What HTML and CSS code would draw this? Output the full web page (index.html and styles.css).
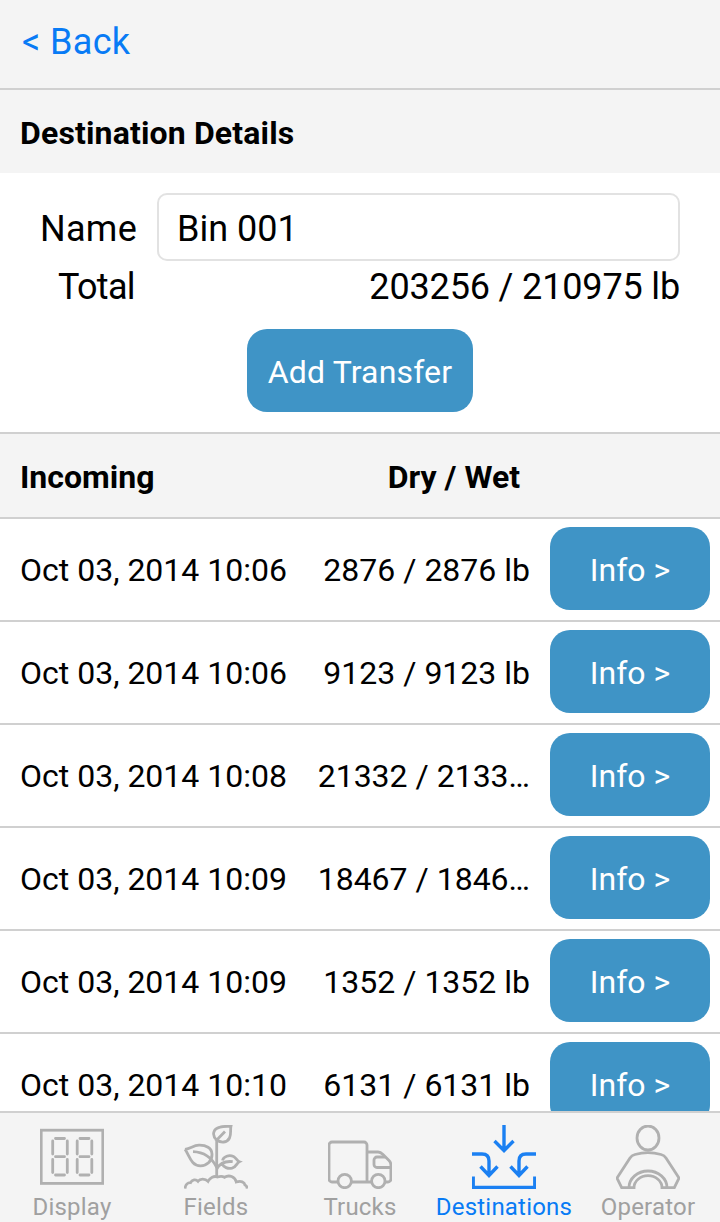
FILE: index.html
```html
<!DOCTYPE html>
<html lang="en">
<head>
    <meta charset="UTF-8">
    <meta name="viewport" content="width=device-width, initial-scale=1.0">
    <title>Destination Details</title>
    <link rel="stylesheet" href="styles.css">
</head>
<body>
    <header class="topbar">
        <a class="back">&lt; Back</a>
    </header>

    <main class="content">
        <h2 class="section-title">Destination Details</h2>

        <div class="details">
            <div class="field">
                <label for="name">Name</label>
                <input type="text" id="name" value="Bin 001">
            </div>
            <div class="field total">
                <span class="label">Total</span>
                <span class="value">203256 / 210975 lb</span>
            </div>
            <button class="button add-button">Add Transfer</button>
        </div>

        <div class="list-header">
            <span>Incoming</span>
            <span class="amount-title">Dry / Wet</span>
        </div>

        <ul class="list">
            <li><span class="date">Oct 03, 2014 10:06</span><span class="amount">2876 / 2876 lb</span><button class="button">Info &gt;</button></li>
            <li><span class="date">Oct 03, 2014 10:06</span><span class="amount">9123 / 9123 lb</span><button class="button">Info &gt;</button></li>
            <li><span class="date">Oct 03, 2014 10:08</span><span class="amount">21332 / 2133…</span><button class="button">Info &gt;</button></li>
            <li><span class="date">Oct 03, 2014 10:09</span><span class="amount">18467 / 1846…</span><button class="button">Info &gt;</button></li>
            <li><span class="date">Oct 03, 2014 10:09</span><span class="amount">1352 / 1352 lb</span><button class="button">Info &gt;</button></li>
            <li><span class="date">Oct 03, 2014 10:10</span><span class="amount">6131 / 6131 lb</span><button class="button">Info &gt;</button></li>
        </ul>
    </main>

    <nav class="tabs">
        <a class="tab">
            <svg viewBox="0 0 64 64">
                <rect x="1.2" y="5.2" width="61.6" height="53.2"/>
                <path stroke-linecap="round" d="M15.500 13.500h9M15.500 31.700h9M15.500 50h9M12.700 16v13M27.300 16v13M12.700 34.500v13M27.300 34.500v13"/>
                <path stroke-linecap="round" d="M40 13.500h9M40 31.700h9M40 50h9M37.200 16v13M51.800 16v13M37.200 34.500v13M51.800 34.500v13"/>
            </svg>
            <span>Display</span>
        </a>
        <a class="tab">
            <svg viewBox="0 0 64 64">
                <path d="M32.700 51V15C27.500 10 29 4 36 2.200C40 1 44 1.500 47 1C46 5 47.500 9 45.500 13C43 18 37 18 32.700 15L41 6.500"/>
                <path d="M1 24.300C7 23.500 9 20.500 15 20.200C22 20 27.800 23 28 29C28.300 36 23 40.800 16.500 40.800C7 40.800 5.500 30.500 1 24.300"/>
                <path d="M9 26.700C18 27 27 31 32.700 42.500"/>
                <path d="M38.500 35.500C39.500 31.500 45 29.500 49.500 31.500C52 32.700 53 35.800 55.300 36.700C52.500 38 52.500 42 48 43.200C44 44 39.500 42.500 38 38.500M48.700 36.700C41 35.800 36 38 32.700 44"/>
                <path d="M1 63.500C1.500 59.500 4 57.500 6.500 57.700C8 54.500 12 54 14 56.300C16 53.500 21 53.200 24 56.300C26 52.500 30 50.500 33.500 52C37 50.700 38.500 51 40.500 52.300C45 49.500 51 51.500 52.300 57C57 55.500 60.500 57 61 60C62.500 60.500 63 62 63.200 63.500"/>
            </svg>
            <span>Fields</span>
        </a>
        <a class="tab">
            <svg viewBox="0 0 64 64">
                <path d="M9.500 57H4a3 3 0 0 1-3-3V20a3 3 0 0 1 3-3h32a3 3 0 0 1 3 3v37H23.500M39 57h4.500M39 27h11c2 0 3.500 1 5 2.500l6 6c1.300 1.300 1.900 2.500 1.900 4.500v14a3 3 0 0 1-3 3H57"/>
                <path d="M57 32h-8a3 3 0 0 0-3 3v4.500a3 3 0 0 0 3 3h13.500"/>
                <circle cx="16.700" cy="56" r="6.700"/>
                <circle cx="50.300" cy="56" r="6.700"/>
            </svg>
            <span>Trucks</span>
        </a>
        <a class="tab active">
            <svg viewBox="0 0 64 64">
                <path d="M32 0v25M22.500 16l9.500 9.500 9.500-9.500"/>
                <path d="M0 29h10c5 0 7 2.500 7 7v14.500M8.500 41.500l8.500 9 8.500-9"/>
                <path d="M64 29H54c-5 0-7 2.500-7 7v14.500M38.500 41.500l8.500 9 8.500-9"/>
                <path d="M1.200 51.500v11h61.600v-11"/>
            </svg>
            <span>Destinations</span>
        </a>
        <a class="tab">
            <svg viewBox="0 0 64 64">
                <ellipse cx="32" cy="13" rx="11" ry="12"/>
                <path d="M13 62.700H5.700L1 53L14 33C15.300 31 16.500 30.200 19 29.500C27 27.300 37 27.300 45 29.500C47.500 30.200 48.700 31 50 33L63 53L58.300 62.700H51A19 16.700 0 0 0 13 62.700Z"/>
                <path d="M13 62.700H18A14 12 0 0 1 46 62.700H51"/>
            </svg>
            <span>Operator</span>
        </a>
    </nav>
</body>
</html>
```

FILE: styles.css
```css
* {
    box-sizing: border-box;
}
body {
    display: flex;
    flex-direction: column;
    height: 100vh;
    margin: 0;
    overflow: hidden;
    background-color: white;
    color: black;
    font-family: Roboto, sans-serif;
    font-size: 32px;
}
.topbar {
    flex: none;
    height: 90px;
    padding: 0 22px;
    background-color: #f4f4f4;
    border-bottom: 2px solid #d0d0d0;
    line-height: 84px;
}
.back {
    color: #087bf5;
    font-size: 36px;
    letter-spacing: 0.35px;
}
.content {
    flex: 1;
    min-height: 0;
    overflow: hidden;
}
.section-title {
    height: 83px;
    margin: 0;
    padding: 0 20px;
    background-color: #f4f4f4;
    font-size: 32px;
    font-weight: bold;
    letter-spacing: 0.15px;
    line-height: 86px;
}
.details {
    display: flex;
    flex-direction: column;
    height: 259px;
    padding: 20px 40px;
    font-size: 36px;
}
.field {
    display: flex;
    align-items: center;
}
.field label, .field .label {
    flex: none;
    width: 117px;
}
.field .label {
    padding-left: 18px;
    letter-spacing: -0.7px;
}
.field input {
    flex: 1;
    min-width: 0;
    height: 68px;
    padding: 4px 18px 0;
    border: 2px solid #e2e2e2;
    border-radius: 10px;
    font: inherit;
    color: inherit;
}
.field label {
    padding-top: 4px;
    letter-spacing: 0.3px;
}
.total {
    height: 52px;
}
.total .value {
    flex: 1;
    text-align: right;
    letter-spacing: -0.15px;
}
.button {
    flex: none;
    width: 160px;
    height: 83px;
    padding: 2px 0 0;
    border: none;
    border-radius: 20px;
    background-color: #3f94c6;
    color: white;
    font: 32px Roboto, sans-serif;
}
.add-button {
    align-self: center;
    width: 226px;
    margin-top: 16px;
    letter-spacing: 0.15px;
}
.list-header {
    display: flex;
    height: 87px;
    padding: 0 20px;
    background-color: #f4f4f4;
    border-top: 2px solid #d0d0d0;
    border-bottom: 2px solid #d0d0d0;
    font-weight: bold;
    line-height: 86px;
}
.amount-title {
    margin-left: auto;
    margin-right: 180px;
}
.list {
    margin: 0;
    padding: 0;
    list-style: none;
}
.list li {
    display: flex;
    align-items: center;
    height: 103px;
    padding: 0 10px 2px 20px;
    border-bottom: 2px solid #d0d0d0;
}
.date {
    flex: none;
    width: 290px;
    padding-top: 2px;
}
.amount {
    flex: 1;
    min-width: 0;
    margin-right: 20px;
    padding-top: 2px;
    text-align: right;
    white-space: nowrap;
}
.tabs {
    display: flex;
    flex: none;
    height: 111px;
    background-color: #f4f4f4;
    border-top: 2px solid #d0d0d0;
}
.tab {
    display: flex;
    flex: 1 1 0;
    flex-direction: column;
    align-items: center;
    min-width: 0;
    padding-top: 12px;
    color: #a0a0a0;
    font-size: 24px;
    letter-spacing: 0.2px;
}
.tab svg {
    flex: none;
    width: 64px;
    height: 64px;
    fill: none;
    stroke: #b0b0b0;
    stroke-width: 2.8;
}
.tab span {
    margin-top: 4px;
    line-height: 28px;
}
.tab.active {
    color: #087bf5;
}
.tab.active svg {
    stroke: #1b80f2;
    stroke-width: 3.4;
}
```
